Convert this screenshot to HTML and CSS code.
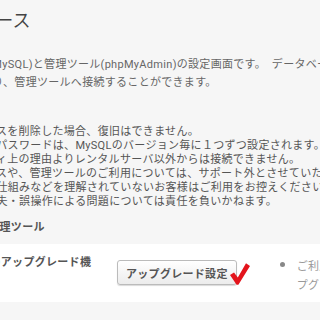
FILE: index.html
```html
<!DOCTYPE html>
<html lang="ja">
<head>
  <meta charset="UTF-8">
  <title>データベース</title>
  <link rel="stylesheet" href="styles.css">
</head>
<body>
  <div class="page">
    <h1 class="title">データベース</h1>
    <p class="intro">データベース(MySQL)と管理ツール(phpMyAdmin)の設定画面です。　データベースの追加や<br>DB作成をしたり、管理ツールへ接続することができます。</p>
    <ul class="notes">
      <li>データベースを削除した場合、復旧はできません。</li>
      <li>ユーザーのパスワードは、MySQLのバージョン毎に１つずつ設定されます。</li>
      <li>セキュリティ上の理由よりレンタルサーバ以外からは接続できません。</li>
      <li>データベースや、管理ツールのご利用については、サポート外とさせていただきます。</li>
      <li>サーバーの仕組みなどを理解されていないお客様はご利用をお控えください。</li>
      <li>データの消失・誤操作による問題については責任を負いかねます。</li>
    </ul>
    <h2 class="section">データベース管理ツール</h2>
    <div class="row">
      <div class="label">管理ツールのアップグレード機能</div>
      <div class="action">
        <button class="btn">アップグレード設定</button>
        <svg class="check" width="20" height="22" viewBox="0 0 20 22">
          <path d="M0 12 L4 9.4 L7.8 14.6 L16 0.3 L20 3 L8.4 21.8 L6.6 21.8 Z" fill="#e3141c"/>
        </svg>
      </div>
      <ul class="hint">
        <li>ご利用中のバージョンによってはアップグレードが必要です。</li>
      </ul>
    </div>
  </div>
</body>
</html>
```

FILE: styles.css
```css
html, body {
  overflow: hidden;
}
body {
  margin: 0;
  background: #f6f6f6;
  color: #555;
  font-family: "Roboto", "Noto Sans CJK JP", sans-serif;
  font-size: 11px;
  letter-spacing: 0.3px;
}
.page {
  margin-left: -79px;
  width: 760px;
  padding-top: 12px;
}
.title {
  margin: 0 0 0 1px;
  font-size: 18px;
  line-height: 18px;
  font-weight: 400;
  color: #444;
}
.intro {
  margin: 26px 0 0 0;
  line-height: 18px;
  color: #666;
}
.notes {
  margin: 33px 0 0 0;
  padding-left: 19px;
  line-height: 14px;
}
.section {
  margin: 12px 0 0 0;
  font-size: 11px;
  line-height: 14px;
  font-weight: 700;
  color: #555;
}
.row {
  display: flex;
  align-items: flex-start;
  margin-top: 9px;
  height: 58px;
  background: #fff;
}
.label {
  width: 162px;
  margin: 12px 0 0 12px;
  line-height: 14px;
  font-weight: 700;
  color: #555;
}
.action {
  display: flex;
  align-items: flex-start;
  margin: 16px 0 0 22px;
}
.btn {
  height: 25px;
  padding: 0 8px;
  font-family: inherit;
  font-size: 11px;
  font-weight: 700;
  letter-spacing: 0.3px;
  color: #555;
  background: linear-gradient(#fff, #ececec);
  border: 1px solid #bbb;
  border-radius: 3px;
  box-shadow: 0 1px 1px rgba(0,0,0,0.15);
}
.check {
  margin: 3px 0 0 -7px;
}
.hint {
  width: 196px;
  margin: 11px 0 0 37px;
  padding-left: 10px;
  line-height: 19px;
  color: #999;
}
.hint li::marker {
  color: #888;
  font-size: 16px;
}
```
